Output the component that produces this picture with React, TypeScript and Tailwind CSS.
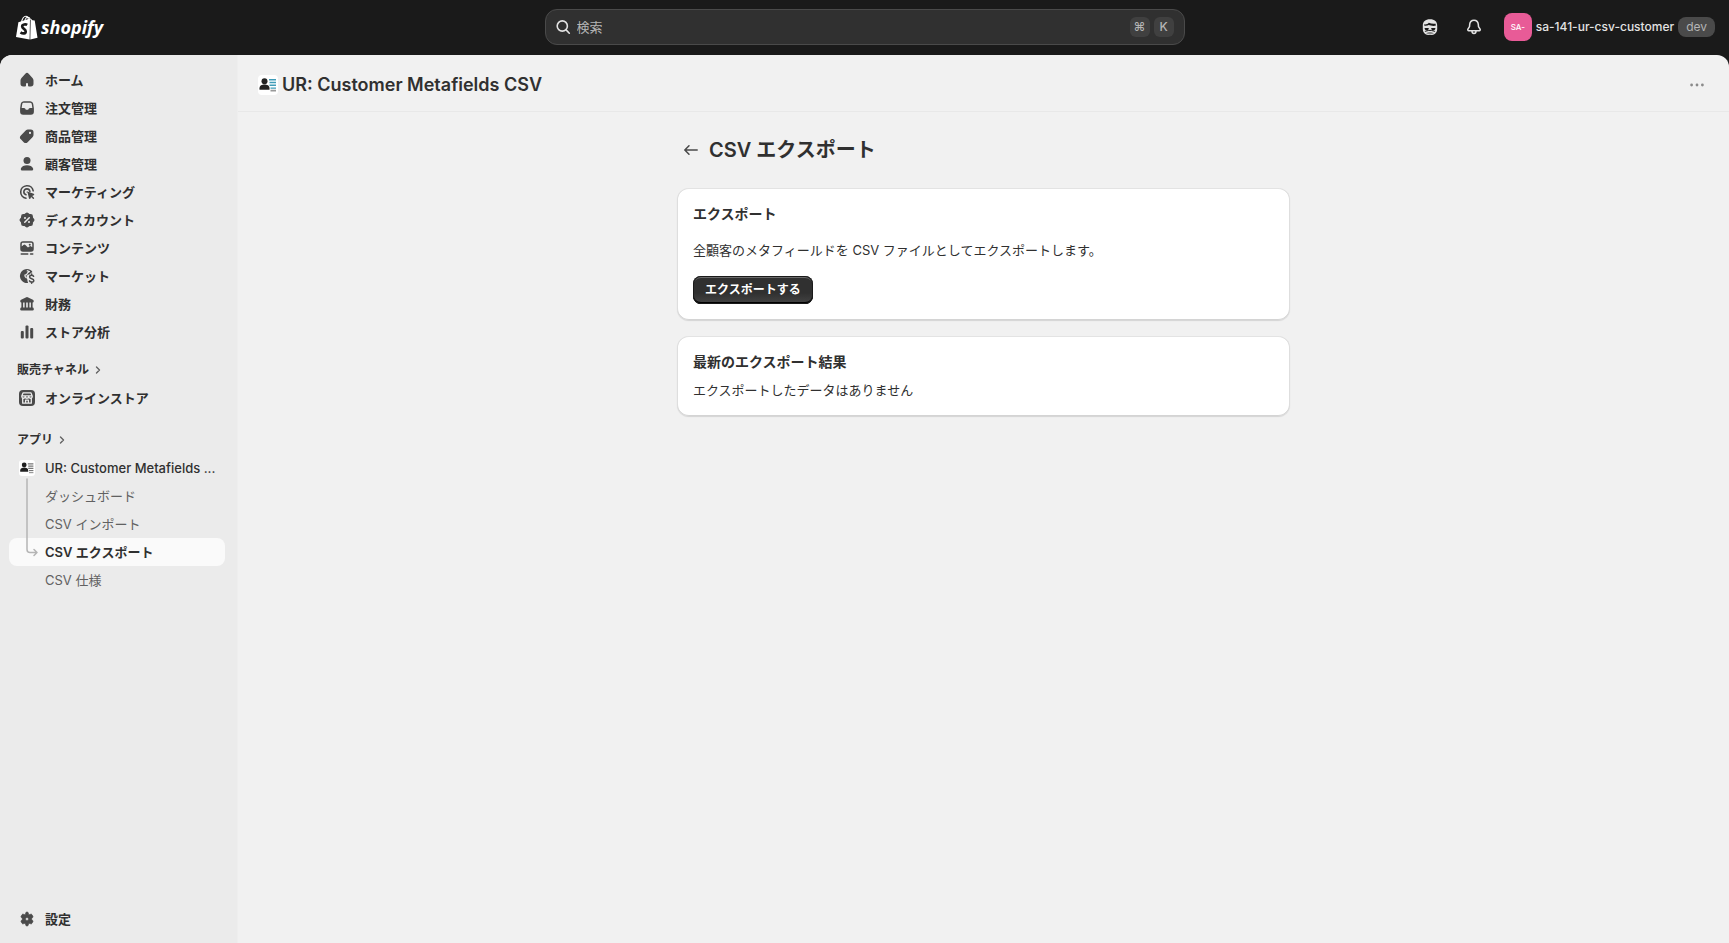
import type { ReactNode } from "react";

type IconProps = { children: ReactNode; className?: string };

function Icon({ children, className = "size-5" }: IconProps) {
  return (
    <svg viewBox="0 0 20 20" fill="currentColor" aria-hidden="true" className={`shrink-0 ${className}`}>
      {children}
    </svg>
  );
}

const HomeIcon = () => (
  <Icon>
    <path d="M8.344 3.692a2.25 2.25 0 0 1 3.312 0l3.854 4.19a3.75 3.75 0 0 1 .99 2.538v3.33a2.75 2.75 0 0 1-2.75 2.75h-1.75a1 1 0 0 1-1-1v-1.5a1 1 0 1 0-2 0v1.5a1 1 0 0 1-1 1h-1.75a2.75 2.75 0 0 1-2.75-2.75v-3.33c0-.94.353-1.847.99-2.539l3.854-4.189Z" />
  </Icon>
);

const OrdersIcon = () => (
  <Icon>
    <path
      fillRule="evenodd"
      d="M6.750 3.300a3 3 0 0 0-2.950 2.500l-.6 3.900c-.1.400-.1.800-.1 1.200v2.850a3 3 0 0 0 3 3h7.800a3 3 0 0 0 3-3V10.900c0-.4 0-.8-.1-1.200l-.6-3.900a3 3 0 0 0-2.950-2.500h-6.500Zm0 1.500c-.74 0-1.360.530-1.480 1.260L4.650 10H6.900c.6 0 1.150.330 1.430.860l.2.360c.18.330.52.530.9.530h1.140c.38 0 .72-.2.9-.53l.2-.36c.28-.53.830-.860 1.430-.860h2.250l-.62-3.940a1.500 1.500 0 0 0-1.480-1.260h-6.500Z"
    />
  </Icon>
);

const ProductsIcon = () => (
  <Icon>
    <path
      fillRule="evenodd"
      d="M10.9 3.500a2.750 2.750 0 0 0-1.940.8l-5.100 5.100a2.750 2.750 0 0 0 0 3.900l2.850 2.840a2.750 2.750 0 0 0 3.900 0l5.080-5.100c.52-.51.81-1.210.81-1.940V6.250a2.750 2.750 0 0 0-2.750-2.750H10.900Zm2.100 4.500a1.100 1.100 0 1 0 0-2.200 1.100 1.100 0 0 0 0 2.200Z"
    />
  </Icon>
);

const CustomersIcon = () => (
  <Icon>
    <circle cx="10" cy="6.500" r="3.500" />
    <path d="M3.900 14.400c.9-2 3.300-3.100 6.100-3.100s5.200 1.100 6.100 3.100c.5 1.100-.4 2.100-1.500 2.100H5.400c-1.100 0-2-1-1.500-2.100Z" />
  </Icon>
);

const MarketingIcon = () => (
  <Icon>
    <g fill="none" stroke="currentColor" strokeWidth="1.600" strokeLinecap="round">
      <path d="M16.200 8.800a6.300 6.300 0 1 0-7.200 7.400" />
      <path d="M12.900 9.300a3.050 3.050 0 1 0-3.900 3.500" />
    </g>
    <path d="M9.600 10.500c-.2-.6.3-1.100.9-.9l6.200 2.200c.7.2.7 1.200 0 1.500l-1.500.6 1.800 1.800a.8.8 0 0 1-1.100 1.100l-1.800-1.800-.6 1.500c-.3.7-1.300.6-1.500 0l-1.400-6Z" />
  </Icon>
);

const DiscountsIcon = () => (
  <Icon>
    <path
      fillRule="evenodd"
      d="M11.570 3.200a2.200 2.200 0 0 0-3.140 0l-.66.670a.7.7 0 0 1-.5.200h-.95a2.250 2.250 0 0 0-2.250 2.250v.95a.7.7 0 0 1-.2.5l-.67.660a2.200 2.200 0 0 0 0 3.140l.67.660c.13.130.2.310.2.500v.95a2.250 2.250 0 0 0 2.250 2.250h.95c.19 0 .37.070.5.200l.66.670a2.200 2.200 0 0 0 3.140 0l.66-.67a.7.7 0 0 1 .5-.2h.95a2.250 2.250 0 0 0 2.250-2.250v-.95a.7.7 0 0 1 .2-.5l.67-.66a2.200 2.200 0 0 0 0-3.140l-.67-.66a.7.7 0 0 1-.2-.5v-.95a2.250 2.250 0 0 0-2.250-2.250h-.95a.7.7 0 0 1-.5-.2l-.66-.67Zm1.210 5.080-4.500 4.500a.75.75 0 0 1-1.060-1.060l4.500-4.500a.75.75 0 1 1 1.060 1.060ZM9 8a1 1 0 1 1-2 0 1 1 0 0 1 2 0Zm3 5a1 1 0 1 0 0-2 1 1 0 0 0 0 2Z"
    />
  </Icon>
);

const ContentIcon = () => (
  <Icon>
    <path
      fillRule="evenodd"
      d="M6 3.250A2.750 2.750 0 0 0 3.250 6v5A2.750 2.750 0 0 0 6 13.750h8A2.750 2.750 0 0 0 16.750 11V6A2.750 2.750 0 0 0 14 3.250H6ZM4.750 6c0-.7.560-1.250 1.250-1.250h8c.7 0 1.250.560 1.250 1.250v3.200l-1-.8a1.500 1.500 0 0 0-1.900 0l-1.350 1.100-2.600-2.500a1.500 1.500 0 0 0-2 0L4.750 8.600V6Zm8 1.750a1 1 0 1 0 0-2 1 1 0 0 0 0 2Z"
    />
    <rect x="3.500" y="15.200" width="8" height="1.500" rx=".75" />
    <rect x="12.800" y="15.200" width="3.700" height="1.500" rx=".75" />
  </Icon>
);

const MarketsIcon = () => (
  <Icon>
    <path
      d="M14.900 5.100A7 7 0 1 0 10.600 17c.4 0 .6-.4.4-.7-.5-.7-.7-1.500-.5-2.200.1-.3 0-.5-.2-.7a2.900 2.900 0 0 1 .7-4.600c.5-.3 1-.4 1.500-.4.300 0 .5-.2.600-.5.300-.7.900-1.200 1.700-1.300.5-.1.600-.9.100-1.500Z"
    />
    <path d="m9.800 4.600 2.600.9-1.700 1.200-1.200 2-1.600.4.300 1.500 1.200 1.300" fill="none" stroke="#ebebeb" strokeWidth="1.200" strokeLinejoin="round" />
    <path
      d="M16.600 10.300c-.4-.7-1.100-1.100-2-1.100-1.200 0-2 .7-2 1.700 0 2.300 4.200 1.300 4.200 3.500 0 1-.9 1.700-2.100 1.700-1 0-1.800-.4-2.200-1.200M14.650 8v1.200M14.650 16.100v1.200"
      fill="none"
      stroke="currentColor"
      strokeWidth="1.500"
      strokeLinecap="round"
    />
  </Icon>
);

const FinanceIcon = () => (
  <Icon>
    <path d="M8.800 3.400a2.600 2.600 0 0 1 2.400 0l4.700 2.400c.5.250.85.780.85 1.350 0 .75-.6 1.350-1.350 1.350H4.600c-.75 0-1.350-.6-1.350-1.350 0-.57.3-1.100.85-1.350l4.700-2.400Z" />
    <path d="M4.400 8h1.700v6H4.400zM7.600 8h1.600v6H7.600zM10.800 8h1.600v6h-1.600zM13.900 8h1.700v6h-1.700z" />
    <rect x="3.250" y="13.500" width="13.500" height="3" rx="1.200" />
  </Icon>
);

const AnalyticsIcon = () => (
  <Icon>
    <rect x="3.800" y="9" width="3" height="7.500" rx="1" />
    <rect x="8.500" y="3.500" width="3" height="13" rx="1" />
    <rect x="13.200" y="6" width="3" height="10.500" rx="1" />
  </Icon>
);

const StoreIcon = () => (
  <Icon>
    <rect x="2" y="2" width="16" height="16" rx="4" />
    <g fill="none" stroke="#ebebeb" strokeWidth="1.300" strokeLinejoin="round">
      <path d="M6 4.900h8l1.200 3v.6a1.700 1.700 0 0 1-3.450 0 1.750 1.750 0 0 1-3.500 0 1.700 1.700 0 0 1-3.450 0v-.6l1.200-3ZM4.800 7.800h10.400M5.700 10.500v4.700h8.600v-4.700M8.600 15v-2.800h2.800V15" />
    </g>
  </Icon>
);

const SettingsIcon = () => (
  <Icon>
    <path
      fillRule="evenodd"
      stroke="currentColor"
      strokeWidth=".6"
      d="M8.700 3.900C8.800 3.300 9.300 3 9.800 3h.4c.5 0 1 .3 1.100.9l.25 1.250c.3.100.6.300.9.450l1.250-.4c.5-.2 1.050 0 1.300.5l.9 1.500c.25.450.15 1-.25 1.350l-.95.850v1.200l.95.850c.4.350.5.900.25 1.350l-.9 1.500c-.25.500-.8.700-1.300.5l-1.250-.4c-.3.150-.6.350-.9.450l-.25 1.250c-.1.600-.6.900-1.100.9h-.4c-.5 0-1-.3-1.100-.9l-.25-1.250c-.3-.1-.6-.3-.9-.45l-1.250.4c-.5.200-1.050 0-1.300-.5l-.9-1.500a1.100 1.100 0 0 1 .25-1.350l.95-.85V9.400l-.95-.85a1.100 1.100 0 0 1-.25-1.350l.9-1.500c.25-.5.800-.7 1.300-.5l1.250.4c.3-.15.600-.35.900-.45L8.700 3.900ZM10 11.500a1.500 1.500 0 1 0 0-3 1.500 1.500 0 0 0 0 3Z"
    />
  </Icon>
);

const ChevronIcon = () => (
  <svg viewBox="0 0 16 16" className="size-4 shrink-0" fill="none" stroke="#616161" strokeWidth="1.400" strokeLinecap="round" strokeLinejoin="round" aria-hidden="true">
    <path d="m6.500 5 3 3-3 3" />
  </svg>
);

function AppIcon({ className, accent }: { className: string; accent: string }) {
  return (
    <svg viewBox="0 0 20 20" className={`shrink-0 ${className}`} aria-hidden="true">
      <rect width="20" height="20" rx="4" fill="#fff" />
      <circle cx="6.500" cy="6.200" r="3" fill="#222" />
      <path d="M1.500 14.800v-1.600C1.500 10.500 4 9.500 6.500 9.500s5 1 5 3.700v1.600z" fill="#222" />
      <g fill={accent}>
        <path d="M11 4h7v1.500h-7zM11.500 6.800H18v1.500h-6.500zM11.500 9.600H18v1.500h-6.500zM12.500 12.400H18v1.300h-5.500z" />
      </g>
      <path d="M12.500 14.800h5.500v1.700h-5.500z" fill="#999" />
    </svg>
  );
}

function NavItem({ icon, label, weight = "font-semibold" }: { icon: ReactNode; label: string; weight?: string }) {
  return (
    <li>
      <a href="#" className={`flex h-7 items-center gap-2 rounded-lg px-2 text-[13px] leading-5 whitespace-nowrap ${weight}`}>
        <span className="text-[#4a4a4a]">{icon}</span>
        <span>{label}</span>
      </a>
    </li>
  );
}

const mainNav = [
  { label: "ホーム", icon: <HomeIcon /> },
  { label: "注文管理", icon: <OrdersIcon /> },
  { label: "商品管理", icon: <ProductsIcon /> },
  { label: "顧客管理", icon: <CustomersIcon /> },
  { label: "マーケティング", icon: <MarketingIcon /> },
  { label: "ディスカウント", icon: <DiscountsIcon /> },
  { label: "コンテンツ", icon: <ContentIcon /> },
  { label: "マーケット", icon: <MarketsIcon /> },
  { label: "財務", icon: <FinanceIcon /> },
  { label: "ストア分析", icon: <AnalyticsIcon /> },
];

const appNav = ["ダッシュボード", "CSV インポート", "CSV エクスポート", "CSV 仕様"];

function Logo() {
  return (
    <a href="#" className="flex items-center gap-[3px] text-white">
      <svg viewBox="0 0 22 25" className="h-[25px] w-[22px]" aria-hidden="true">
        <path d="M2.400 7.200 14 3.600 13.600 24.500 0 22z" fill="#fff" />
        <path d="m14.700 3.600 1.700 1.700 2.300.2L21.500 22.800l-7.200 1.700z" fill="#fff" />
        <path d="M5.500 7.500C6.200 3.500 8.200 1.200 9.900 1.200c1.800 0 2.600 1.900 2.700 5M8.700 6.500c.4-2.700 1.900-4.200 3.300-4.200 1.300 0 2 1 2.300 2.700" fill="none" stroke="#fff" strokeWidth="1.100" />
        <path d="M11.200 9.900c-1.300-.8-5-.9-5 1.600 0 2.300 3.500 2.500 3.500 4.900 0 2.300-2.700 2.600-5.200.9" fill="none" stroke="#1a1a1a" strokeWidth="2.700" />
      </svg>
      <span className="font-['Open_Sans',sans-serif] text-lg leading-6 font-bold italic">shopify</span>
    </a>
  );
}

function TopBar() {
  return (
    <header className="grid h-[55px] shrink-0 grid-cols-[1fr_minmax(0,640px)_1fr] items-center bg-[#1a1a1a] pb-px">
      <div className="pl-4">
        <Logo />
      </div>
      <label className="flex h-9 items-center gap-1 rounded-xl border border-[#4a4a4a] bg-[#303030] pr-[10px] pl-[7px]">
        <svg viewBox="0 0 20 20" className="size-5 shrink-0" fill="none" stroke="#e3e3e3" strokeWidth="1.600" strokeLinecap="round" aria-hidden="true">
          <circle cx="9.300" cy="9" r="5.100" />
          <path d="m13.100 12.900 3.200 3.300" />
        </svg>
        <input
          type="search"
          aria-label="検索"
          placeholder="検索"
          className="min-w-0 flex-1 bg-transparent text-[13px] leading-5 text-white outline-none placeholder:text-[#b5b5b5]"
        />
        <kbd className="grid size-5 place-items-center rounded-md bg-[#404040] font-[Inter,'DejaVu_Sans',sans-serif] text-xs font-medium text-[#b5b5b5]">⌘</kbd>
        <kbd className="grid size-5 place-items-center rounded-md bg-[#404040] font-[Inter,sans-serif] text-xs font-medium text-[#b5b5b5]">K</kbd>
      </label>
      <div className="flex items-center justify-end gap-2 pr-[14px]">
        <button type="button" aria-label="Sidekick" className="grid h-9 w-9 place-items-center text-[#e3e3e3]">
          <Icon>
            <path d="M10 2.200c-4.700 0-7.200 2.300-7.200 6.300v3.400c0 3.700 2.600 6.100 7.200 6.100s7.200-2.400 7.200-6.100V8.500c0-4-2.500-6.300-7.200-6.300Z" />
            <path d="M4.300 8.800V7.300c1.800.3 3.600-.3 4.500-1.500 1.800.9 4.300 1.200 6.900.9v2.100c-3 .3-5.200 0-7-.7-1 .7-2.500.9-4.400.7Z" fill="#1a1a1a" />
            <path d="M4.600 10.900h4.200c0 1.600-.7 2.500-2 2.500-1.400 0-2.200-.9-2.200-2.500ZM11.200 10.900h4.200c0 1.600-.8 2.500-2.200 2.500-1.300 0-2-.9-2-2.500Z" fill="#1a1a1a" />
            <path d="M4.900 14.500c1-.2 2.600-1.100 5.100-1.100s4.100.9 5.100 1.100" fill="none" stroke="#1a1a1a" strokeWidth="1" />
            <path d="M6.200 16.600c.8-1 2.100-1.500 3.800-1.500s3 .5 3.800 1.500c-1 .5-2.300.8-3.800.8s-2.800-.3-3.800-.8Z" fill="#8a8a8a" />
          </Icon>
        </button>
        <button type="button" aria-label="通知" className="grid h-9 w-9 place-items-center text-[#e3e3e3]">
          <svg viewBox="0 0 20 20" className="size-5" fill="none" stroke="currentColor" strokeWidth="1.500" strokeLinejoin="round" aria-hidden="true">
            <path d="M10 3.200c-2.600 0-4.100 1.900-4.300 4.200l-.2 2.200-1.600 2.600c-.4.700 0 1.500.8 1.500h10.600c.8 0 1.200-.8.800-1.500l-1.600-2.600-.2-2.200c-.2-2.300-1.700-4.200-4.300-4.200ZM7.900 14c.1 1.500.9 2.500 2.100 2.500s2-1 2.100-2.500" />
          </svg>
        </button>
        <button type="button" className="ml-1 flex items-center gap-1 text-[#e3e3e3]">
          <span className="grid size-7 place-items-center rounded-lg bg-[#e85b97] text-[8px] font-medium text-white">SA-</span>
          <span className="text-xs leading-5 font-medium">sa-141-ur-csv-customer</span>
          <span className="rounded-lg bg-[#4a4a4a] px-2 text-xs leading-5 text-[#b5b5b5]">dev</span>
        </button>
      </div>
    </header>
  );
}

function Sidebar() {
  return (
    <nav className="flex w-[238px] shrink-0 flex-col border-r border-[#eeeeee] bg-[#ebebeb] px-[9px] pt-[11px] pb-[10px]">
      <ul>
        {mainNav.map((item) => (
          <NavItem key={item.label} icon={item.icon} label={item.label} />
        ))}
      </ul>
      <a href="#" className="mt-[10px] flex h-7 items-center gap-px px-2 text-xs font-semibold">
        販売チャネル
        <ChevronIcon />
      </a>
      <ul>
        <NavItem icon={<StoreIcon />} label="オンラインストア" />
      </ul>
      <a href="#" className="mt-[14px] flex h-7 items-center gap-px px-2 text-xs font-semibold">
        アプリ
        <ChevronIcon />
      </a>
      <ul>
        <NavItem
          icon={
            <span className="grid size-5 place-items-center">
              <AppIcon className="size-4" accent="#777" />
            </span>
          }
          label="UR: Customer Metafields ..."
          weight="font-medium"
        />
      </ul>
      <ul className="relative w-[216px]">
        {appNav.map((label) => {
          const active = label === "CSV エクスポート";
          return (
            <li key={label}>
              <a
                href="#"
                aria-current={active ? "page" : undefined}
                className={`flex h-7 items-center rounded-lg pl-9 text-[13px] leading-5 ${
                  active ? "bg-[#fafafa] font-semibold text-[#303030]" : "text-[#616161]"
                }`}
              >
                {label}
              </a>
            </li>
          );
        })}
        <svg viewBox="0 0 14 80" className="absolute -top-[4px] left-4 h-20 w-[14px]" fill="none" stroke="#b5b5b5" strokeWidth="1.500" strokeLinecap="round" strokeLinejoin="round" aria-hidden="true">
          <path d="M2 1v70.500a3 3 0 0 0 3 3h7M9 71.500l3 3-3 3" />
        </svg>
      </ul>
      <ul className="mt-auto">
        <NavItem icon={<SettingsIcon />} label="設定" />
      </ul>
    </nav>
  );
}

function Card({ children }: { children: ReactNode }) {
  return (
    <section className="rounded-xl bg-white p-4 shadow-[0_1px_1px_rgba(0,0,0,0.12),inset_0_-1px_0_#d4d4d4,inset_1px_0_0_#dedede,inset_-1px_0_0_#dedede,inset_0_1px_0_#e3e3e3]">
      {children}
    </section>
  );
}

export default function App() {
  return (
    <div className="flex min-h-screen flex-col bg-[#1a1a1a] font-[Inter,'Noto_Sans_CJK_JP',sans-serif] text-[13px] text-[#303030]">
      <TopBar />
      <div className="flex flex-1 overflow-hidden rounded-t-xl bg-[#f1f1f1]">
        <Sidebar />
        <main className="min-w-0 flex-1">
          <div className="flex h-[57px] items-center gap-1 border-b border-[#e8e8e8] px-5 pt-1">
            <AppIcon className="size-5" accent="#3f9cb8" />
            <h1 className="text-lg leading-6 font-semibold">UR: Customer Metafields CSV</h1>
            <button type="button" aria-label="その他の操作" className="ml-auto grid h-7 w-6 place-items-center text-[#8a8a8a]">
              <Icon>
                <circle cx="4.600" cy="10" r="1.400" />
                <circle cx="10" cy="10" r="1.400" />
                <circle cx="15.400" cy="10" r="1.400" />
              </Icon>
            </button>
          </div>
          <div className="mx-auto max-w-[661px] px-6 pt-6">
            <div className="flex h-7 items-center gap-1">
              <button type="button" aria-label="戻る" className="grid size-7 place-items-center text-[#4a4a4a]">
                <svg viewBox="0 0 20 20" className="size-5" fill="none" stroke="currentColor" strokeWidth="1.500" strokeLinecap="round" strokeLinejoin="round" aria-hidden="true">
                  <path d="M16.200 10H4M8 5.700 3.800 10 8 14.300" />
                </svg>
              </button>
              <h2 className="text-xl leading-6 font-semibold">CSV エクスポート</h2>
            </div>
            <div className="mt-6 flex flex-col gap-4">
              <Card>
                <h3 className="text-sm leading-5 font-semibold">エクスポート</h3>
                <p className="mt-4 text-[13px] leading-5">全顧客のメタフィールドを CSV ファイルとしてエクスポートします。</p>
                <button
                  type="button"
                  className="mt-4 flex h-7 items-center rounded-lg bg-linear-to-b from-[#303030] from-60% to-[#454545] px-3 text-xs font-semibold text-white shadow-[inset_0_0_0_1px_#1a1a1a,inset_0_-2px_0_#000,inset_0_2px_0_#6a6a6a]"
                >
                  エクスポートする
                </button>
              </Card>
              <Card>
                <h3 className="text-sm leading-5 font-semibold">最新のエクスポート結果</h3>
                <p className="mt-2 text-[13px] leading-5">エクスポートしたデータはありません</p>
              </Card>
            </div>
          </div>
        </main>
      </div>
    </div>
  );
}
